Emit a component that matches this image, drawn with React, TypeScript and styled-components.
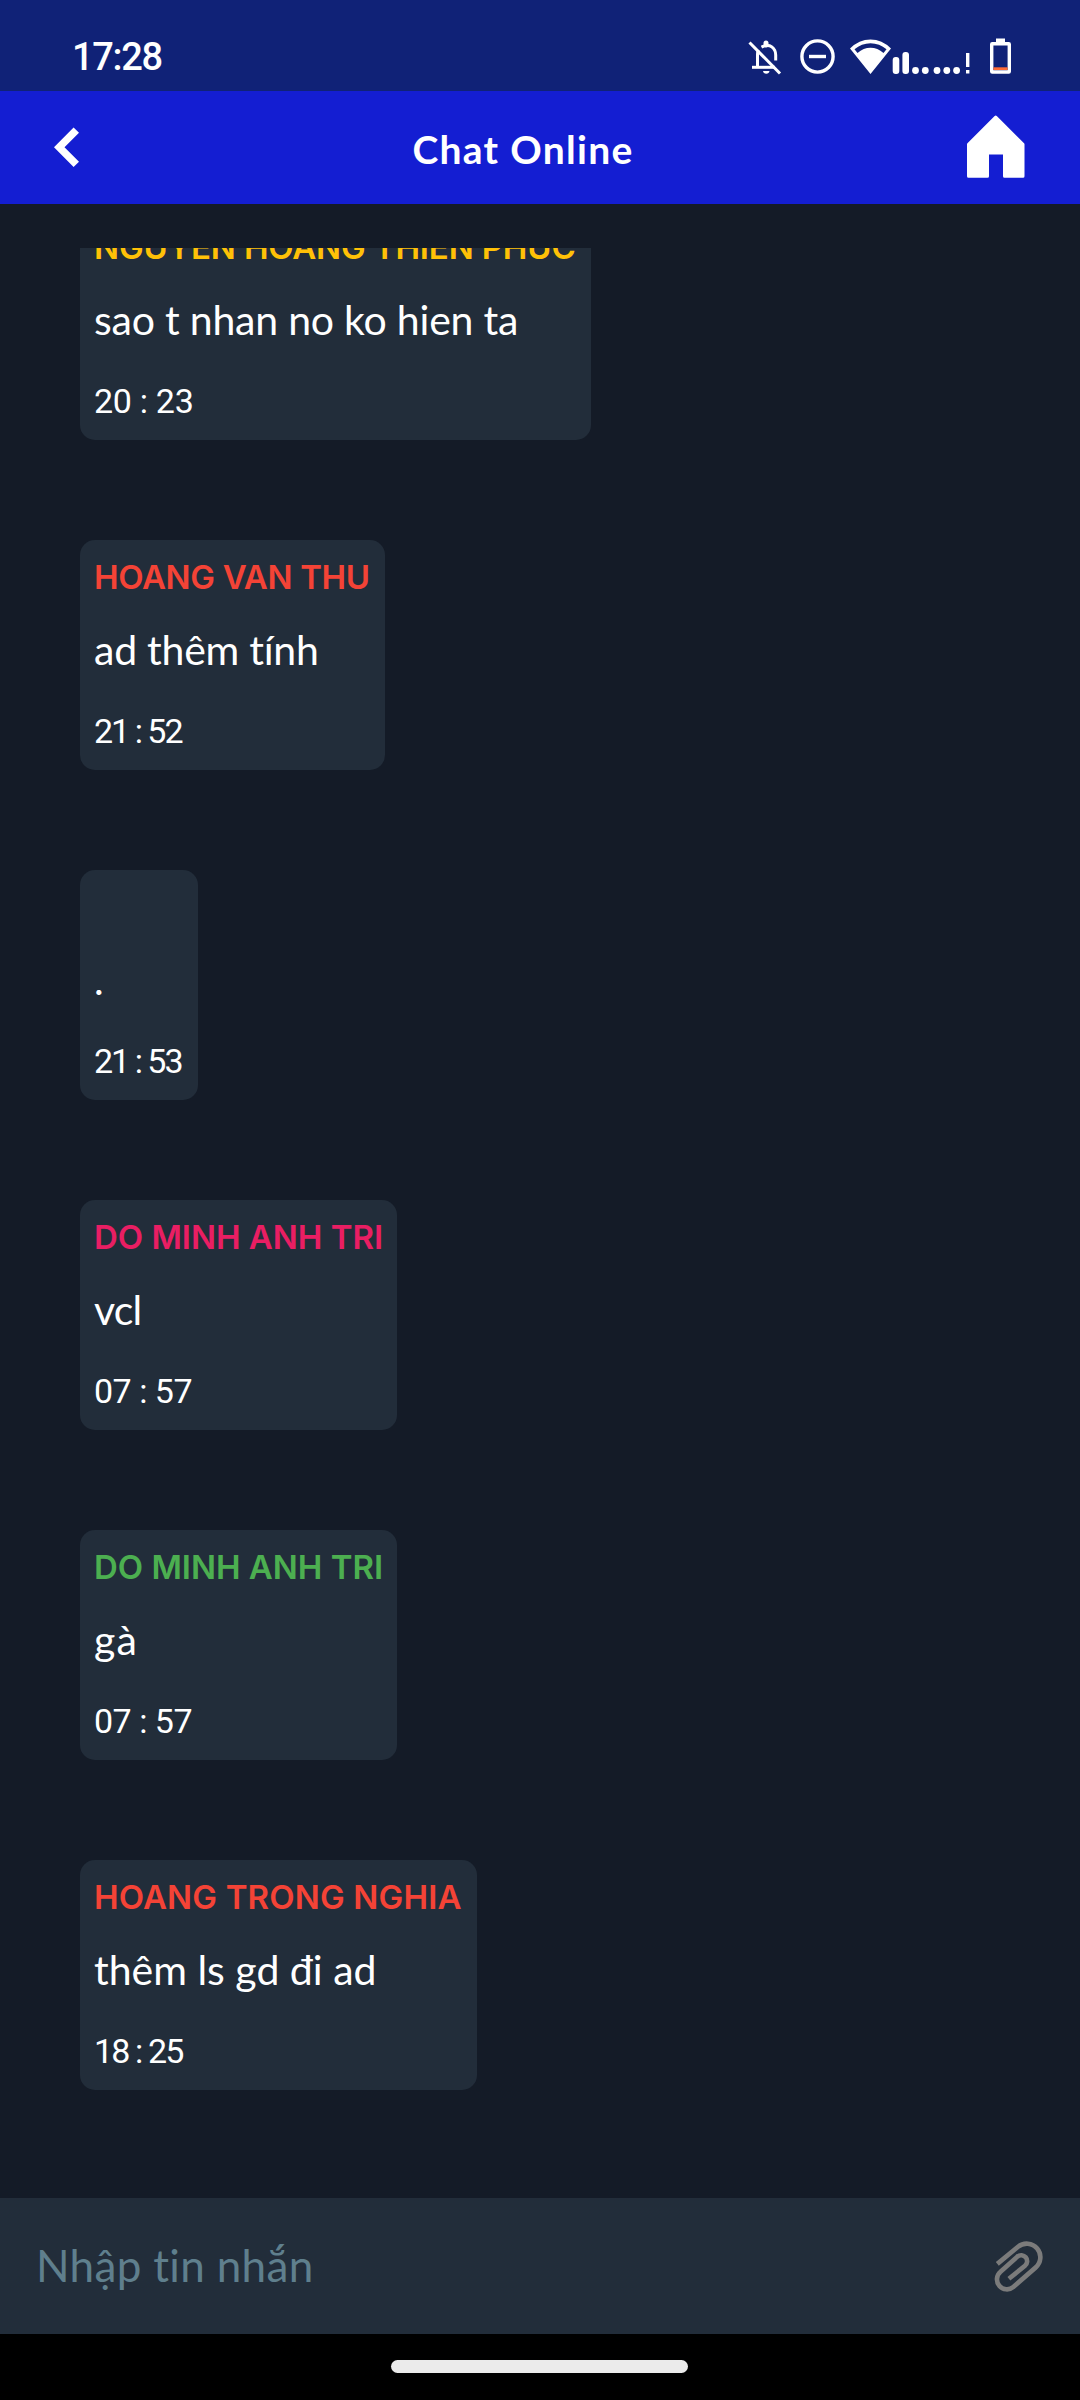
import React from "react";
import styled, { createGlobalStyle } from "styled-components";

const GlobalStyle = createGlobalStyle`
  * { box-sizing: border-box; }
  body { margin: 0; background: #141b27; }
`;

const Screen = styled.div`
  display: flex;
  flex-direction: column;
  width: 1080px;
  height: 2400px;
  overflow: hidden;
  background: #141b27;
  color: #fff;
  font-family: Lato, "Open Sans", sans-serif;
  white-space: pre;
`;

const StatusBar = styled.header`
  display: flex;
  flex: none;
  align-items: center;
  justify-content: space-between;
  height: 91px;
  padding: 23px 69px 0 72px;
  background: #102277;
`;

const Clock = styled.time`
  font: 500 38px/44px Roboto, sans-serif;
  letter-spacing: -1.3px;
`;

const StatusIcons = styled.div`
  display: flex;
  align-items: center;
`;

const Glyph = styled.svg<{ $after?: number }>`
  display: block;
  flex: none;
  margin-right: ${(p) => p.$after ?? 0}px;
`;

const TitleBar = styled.nav`
  display: flex;
  flex: none;
  align-items: center;
  height: 113px;
  padding: 0 55px 0 54px;
  background: #141ed2;
`;

const IconButton = styled.button`
  display: flex;
  flex: none;
  padding: 0;
  border: 0;
  background: none;
  color: inherit;
`;

const Title = styled.h1`
  flex: 1;
  margin: 0;
  padding-top: 2px;
  font-size: 39px;
  font-weight: 700;
  line-height: 48px;
  letter-spacing: 1.3px;
  text-align: center;
`;

const Messages = styled.main`
  display: flex;
  flex: 1;
  flex-direction: column;
  align-items: flex-start;
  justify-content: flex-end;
  gap: 100px;
  min-height: 0;
  margin-top: 44px;
  padding: 0 80px 108px;
  overflow: hidden;
`;

const Bubble = styled.article<{ $width: number }>`
  flex: none;
  width: ${(p) => p.$width}px;
  height: 230px;
  padding: 17px 0 0 14px;
  border-radius: 15px;
  background: #222d3a;
`;

const Sender = styled.div<{ $color: string; $tracking: number }>`
  height: 40px;
  color: ${(p) => p.$color};
  font: 600 33px/40px Inter, sans-serif;
  letter-spacing: ${(p) => p.$tracking}px;
`;

const Body = styled.div<{ $tracking: number }>`
  height: 50px;
  margin-top: 28px;
  font-size: 41px;
  line-height: 50px;
  letter-spacing: ${(p) => p.$tracking}px;
`;

const Stamp = styled.div<{ $tracking: number }>`
  height: 40px;
  margin-top: 36px;
  font: 400 34px/40px Roboto, sans-serif;
  letter-spacing: ${(p) => p.$tracking}px;
`;

const Composer = styled.footer`
  display: flex;
  flex: none;
  align-items: center;
  justify-content: space-between;
  height: 136px;
  padding: 0 37px 0 36px;
  background: #222d3a;
`;

const Placeholder = styled.span`
  padding-bottom: 2px;
  color: #5f7f8d;
  font-size: 44px;
  line-height: 56px;
  letter-spacing: 0.33px;
`;

const SystemNav = styled.div`
  display: flex;
  flex: none;
  justify-content: center;
  height: 66px;
  padding: 26px 1px 0 0;
  background: #000;
`;

const HomePill = styled.div`
  width: 297px;
  height: 13px;
  border-radius: 7px;
  background: #ebebeb;
`;

interface Message {
  name: string;
  color: string;
  text: string;
  time: string;
  width: number;
  nameTracking: number;
  textTracking: number;
  timeTracking: number;
}

const messages: Message[] = [
  { name: "NGUYEN HOANG THIEN PHUC", color: "#ffc107", text: "sao t nhan no ko hien ta", time: "20 : 23", width: 511, nameTracking: -0.15, textTracking: -0.22, timeTracking: -0.3 },
  { name: "HOANG VAN THU", color: "#f44336", text: "ad thêm tính", time: "21 : 52", width: 305, nameTracking: -0.35, textTracking: -0.25, timeTracking: -2 },
  { name: "", color: "#fff", text: ".", time: "21 : 53", width: 118, nameTracking: 0, textTracking: 0, timeTracking: -2 },
  { name: "DO MINH ANH TRI", color: "#e91e63", text: "vcl", time: "07 : 57", width: 317, nameTracking: -0.03, textTracking: -0.8, timeTracking: -0.5 },
  { name: "DO MINH ANH TRI", color: "#4caf50", text: "gà", time: "07 : 57", width: 317, nameTracking: -0.03, textTracking: 1.2, timeTracking: -0.5 },
  { name: "HOANG TRONG NGHIA", color: "#f44336", text: "thêm ls gd đi ad", time: "18 : 25", width: 397, nameTracking: 0.15, textTracking: 0, timeTracking: -1.85 },
];

const BellOff = () => (
  <Glyph $after={18} width="34" height="44" viewBox="748 35 34 44" fill="none" stroke="#fff" strokeWidth="3">
    <path d="M749.5 42.5 780 73.5" />
    <path d="M752 67.3h23" />
    <path d="M757.5 67V54.5q0-2.5 1-4.500" />
    <path d="M761.500 47.200q9-4.500 13.300 3.300q.9 2 .9 4.500v5.500" />
    <path d="M766 45v-2" strokeWidth="5" strokeLinecap="round" />
    <path d="M763 71h6.500a3.300 3.300 0 0 1-6.500 0z" fill="#fff" stroke="none" />
  </Glyph>
);

const DoNotDisturb = () => (
  <Glyph $after={15} width="35" height="44" viewBox="800 35 35 44" fill="none" stroke="#fff" strokeWidth="3.400">
    <circle cx="817.500" cy="56.500" r="15.600" />
    <path d="M809 56.500h17" />
  </Glyph>
);

const Wifi = () => (
  <Glyph $after={1} width="41" height="44" viewBox="850 35 41 44" fill="#fff">
    <path fillRule="evenodd" d="M850 48.500Q859 39.500 870.500 39.500T891 48.500L870.500 74ZM854.500 49.300L857.500 53Q863.500 47.700 870.500 47.700T883.500 53L886.500 49.300Q879.500 43.200 870.500 43.200T854.500 49.300Z" />
  </Glyph>
);

const Signal = () => (
  <Glyph $after={20} width="78" height="44" viewBox="892 35 78 44" fill="#fff">
    <rect x="892.700" y="57" width="6.600" height="17" rx="3" />
    <rect x="902.400" y="52" width="6.600" height="22" rx="3" />
    {[915.5, 925.3, 937, 946.8, 956.6].map((cx) => (
      <circle key={cx} cx={cx} cy="70.500" r="3.400" />
    ))}
    <path d="M966 53h3.400v14h-3.400zM966 70h3.400v3.500h-3.400z" />
  </Glyph>
);

const Battery = () => (
  <Glyph width="21" height="44" viewBox="990 35 21 44">
    <rect x="996" y="38.500" width="9" height="5" fill="#fff" />
    <rect x="991.700" y="43.700" width="17.600" height="28.300" rx="0.500" fill="none" stroke="#fff" strokeWidth="3.400" />
    <path d="M993.400 67.300h14.200v2.700h-14.200z" fill="#ff6b35" />
  </Glyph>
);

export default function App() {
  return (
    <>
      <GlobalStyle />
      <Screen>
        <StatusBar>
          <Clock>17:28</Clock>
          <StatusIcons>
            <BellOff />
            <DoNotDisturb />
            <Wifi />
            <Signal />
            <Battery />
          </StatusIcons>
        </StatusBar>
        <TitleBar>
          <IconButton aria-label="Back">
            <Glyph width="25" height="41" viewBox="54 127 25 41" fill="#fff">
              <path d="M54 147.200 73.600 127.500 79 132.700 64.500 147.200 79 161.700 73.600 167Z" />
            </Glyph>
          </IconButton>
          <Title>Chat Online</Title>
          <IconButton aria-label="Home">
            <Glyph width="58" height="65" viewBox="967 115 58 65" fill="#fff" stroke="#fff" strokeWidth="3" strokeLinejoin="round">
              <path d="M995.700 117 1023 144.300V176.200H1004.500V153H987.500V176.200H968.500V144.300Z" />
            </Glyph>
          </IconButton>
        </TitleBar>
        <Messages>
          {messages.map((m, i) => (
            <Bubble key={i} $width={m.width}>
              <Sender $color={m.color} $tracking={m.nameTracking}>{m.name}</Sender>
              <Body $tracking={m.textTracking}>{m.text}</Body>
              <Stamp $tracking={m.timeTracking}>{m.time}</Stamp>
            </Bubble>
          ))}
        </Messages>
        <Composer>
          <Placeholder>Nhập tin nhắn</Placeholder>
          <IconButton aria-label="Attach">
            <Glyph width="49" height="53" viewBox="162 178 148 158" fill="none" stroke="#7b7b7b" strokeWidth="14">
              <path d="M172 249 234.600 197.600A41 41 0 0 1 287.400 260.400L220.300 319A30 30 0 0 1 181.700 273L232.400 227.200A18 18 0 0 1 255.600 254.800L207 294" />
            </Glyph>
          </IconButton>
        </Composer>
        <SystemNav>
          <HomePill />
        </SystemNav>
      </Screen>
    </>
  );
}
